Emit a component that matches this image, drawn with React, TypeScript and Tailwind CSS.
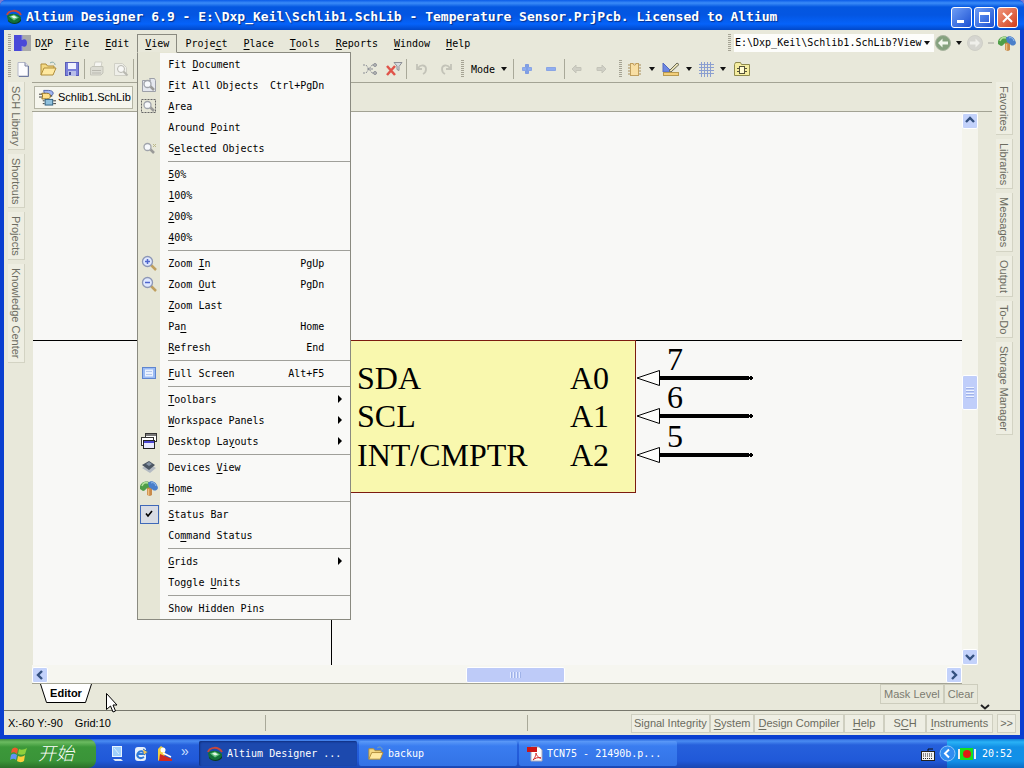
import type { ReactNode } from "react";
import clsx from "clsx";

type MenuEntry = {
  label: string;
  keys?: string;
  icon?: ReactNode;
  sub?: boolean;
  checked?: boolean;
};

// "&" marks the accelerator letter, which is drawn underlined
function Accel({ text }: { text: string }) {
  const at = text.indexOf("&");
  if (at < 0) return <span className="whitespace-pre">{text}</span>;
  return (
    <span className="whitespace-pre">
      {text.slice(0, at)}
      <u className="underline-offset-2">{text[at + 1]}</u>
      {text.slice(at + 2)}
    </span>
  );
}

function Gripper() {
  return (
    <svg width="4" height="18" className="shrink-0">
      {[0, 2, 4, 6, 8, 10, 12, 14, 16].map((y) => (
        <rect key={y} x="0" y={y} width="3" height="1" fill="#a5a394" />
      ))}
    </svg>
  );
}

function Separator() {
  return <div className="h-5 w-px shrink-0 bg-[#a9a999]" />;
}

function Caret() {
  return (
    <svg width="6" height="4" viewBox="0 0 6 4" className="shrink-0">
      <path d="M0 0h6L3 4z" fill="#111" />
    </svg>
  );
}

function Chevron({ dir }: { dir: "up" | "down" | "left" | "right" }) {
  const paths = {
    up: "M3 8l4-4 4 4",
    down: "M3 5l4 4 4-4",
    left: "M9 3L5 7l4 4",
    right: "M5 3l4 4-4 4",
  };
  return (
    <svg width="14" height="14" viewBox="0 0 14 14">
      <path d={paths[dir]} fill="none" stroke="#33507f" strokeWidth="2.4" />
    </svg>
  );
}

function AltiumLogo() {
  return (
    <svg width="16" height="16" viewBox="0 0 16 16" className="shrink-0">
      <path d="M1 6c2-5 10-6 14 0" fill="none" stroke="#c8473a" strokeWidth="2" />
      <path d="M1 7c3-3 10-3 14 1v3c-3 4-10 4-13 1z" fill="#137038" />
      <path d="M2 11c3 4 10 4 13-1v2c-3 4-10 4-13 0z" fill="#0a3d1d" />
      <path d="M3 7.500l5-2 5 3-5 3z" fill="#5fc27a" />
      <path d="M5 7.500l3-1 3 2-3 1z" fill="#e7f7e8" />
    </svg>
  );
}

function PuzzleIcon() {
  return (
    <svg width="17" height="16" viewBox="0 0 17 16" className="shrink-0">
      <rect x="7" width="10" height="16" fill="#a9aaa9" />
      <path d="M0 0h8v5c3-2 5 0 5 3s-2 5-5 3v5H0z" fill="#4a49d8" />
      <path d="M8 0v5M8 11v5" stroke="#8a8ae8" />
    </svg>
  );
}

function NewIcon() {
  return (
    <svg width="16" height="16" viewBox="0 0 16 16">
      <path d="M2 1.500h7l3 3V15H2z" fill="#fdfdff" stroke="#b4b8c8" />
      <path d="M9 1.500V5h3" fill="#dde" stroke="#7f86a0" />
      <path d="M12.500 5v10.500H3" fill="none" stroke="#6f7aa0" />
    </svg>
  );
}

function OpenIcon({ size = 18 }: { size?: number }) {
  return (
    <svg width={size} height={size} viewBox="0 0 18 18" className="shrink-0">
      <path d="M2 15V4h5l1.500 2H15v3" fill="#f4d983" stroke="#b08d3a" />
      <path d="M2 15l3-7h12l-3 7z" fill="#ffe9a0" stroke="#b08d3a" />
      <path d="M11 3c3-2 5 0 5 2" fill="none" stroke="#8aa" />
    </svg>
  );
}

function SaveIcon() {
  return (
    <svg width="16" height="16" viewBox="0 0 16 16">
      <rect x="1.500" y="1.500" width="13" height="13" fill="#7a80da" stroke="#5a5eb8" />
      <rect x="4" y="2" width="8" height="6" fill="#f1f3ff" />
      <rect x="4" y="10" width="8" height="5" fill="#b9bfe8" />
      <rect x="5" y="11" width="2" height="3" fill="#41479d" />
    </svg>
  );
}

function PrintIcon() {
  return (
    <svg width="16" height="16" viewBox="0 0 16 16">
      <path d="M5 6l1-5h7l-1 5" fill="#f6f6f2" stroke="#cfcfc5" />
      <path d="M1.500 7L3 5.500h11V12l-2 2H1.500z" fill="#dcdcd3" stroke="#c4c4b9" />
      <path d="M3 9.500h9M3 12h9" stroke="#b9b8af" />
    </svg>
  );
}

function PreviewIcon() {
  return (
    <svg width="16" height="16" viewBox="0 0 16 16">
      <path d="M1.500 2.500h8l4 4v8h-12z" fill="#efefe9" stroke="#d0d0c6" />
      <circle cx="8" cy="8" r="3.500" fill="#f8f8f6" stroke="#b8b8b0" />
      <path d="M10.500 10.500l4 4" stroke="#b8b8b0" strokeWidth="2" />
    </svg>
  );
}

function CrossWiresIcon() {
  return (
    <svg width="16" height="16" viewBox="0 0 16 16" fill="none" stroke="#8c8f96">
      <path d="M1 4h3l6 8h4M1 12h3l6-8h4" strokeDasharray="2 1" />
      <circle cx="13" cy="4" r="1.500" />
      <circle cx="13" cy="12" r="1.500" />
      <path d="M5 8h6" />
    </svg>
  );
}

function ClearFilterIcon() {
  return (
    <svg width="18" height="16" viewBox="0 0 18 16">
      <path d="M9 1.500h8l-3 4v4l-2-1V5z" fill="#d7dade" stroke="#8d9096" />
      <path d="M2 5l8 9M10 5l-8 9" stroke="#e0544a" strokeWidth="2.500" />
    </svg>
  );
}

function UndoIcon({ flip }: { flip?: boolean }) {
  return (
    <svg width="14" height="14" viewBox="0 0 14 14" className={clsx(flip && "-scale-x-100")}>
      <path d="M2 2v5h5M3 6c3-4 8-3 8 1 0 2-1 4-3 5" fill="none" stroke="#c3c3b8" strokeWidth="1.800" />
    </svg>
  );
}

function PlusIcon({ minus }: { minus?: boolean }) {
  return (
    <svg width="12" height="12" viewBox="0 0 12 12">
      {!minus && <path d="M4.500 1.500h3v9h-3z" fill="#7fa0e6" stroke="#7f9be0" />}
      <path d="M1.500 4.500h9v3h-9z" fill="#8fadf0" stroke="#8aa5e4" />
      {!minus && <path d="M6 2v8" stroke="#7fa0e6" strokeWidth="2" />}
    </svg>
  );
}

function GreyArrow({ flip }: { flip?: boolean }) {
  return (
    <svg width="12" height="12" viewBox="0 0 12 12" className={clsx(flip && "-scale-x-100")}>
      <path d="M1 6l4-4v2.500h5v3H5V10z" fill="#cfcfc5" stroke="#c4c4b9" />
    </svg>
  );
}

function ChipIcon() {
  return (
    <svg width="16" height="16" viewBox="0 0 16 16">
      <path d="M1 4h13M1 7h13M1 10h13M1 13h13" stroke="#a98f5a" />
      <rect x="3.500" y="2.500" width="8" height="12" fill="#f8dfa4" stroke="#c0a060" />
      <path d="M6 2.500c0 2 3 2 3 0" fill="#fff" stroke="#b48a3c" />
    </svg>
  );
}

function DrawIcon() {
  return (
    <svg width="18" height="16" viewBox="0 0 18 16">
      <path d="M1 2l9 9H1z" fill="#6c87e2" stroke="#5068c0" />
      <path d="M7 10l8-8 2 1.500-8 7.500z" fill="#e9e1b4" stroke="#6a6a58" />
      <rect x="1.500" y="11.500" width="15" height="3" fill="#f3cf7a" stroke="#b89a50" />
    </svg>
  );
}

function GridIcon() {
  return (
    <svg width="15" height="15" viewBox="0 0 15 15">
      <path
        d="M2.500 0v15M5.500 0v15M8.500 0v15M11.500 0v15M0 2.500h15M0 5.500h15M0 8.500h15M0 11.500h15"
        stroke="#8b9fd0"
      />
    </svg>
  );
}

function FolderChipIcon() {
  return (
    <svg width="16" height="14" viewBox="0 0 16 14">
      <path d="M.5 2.500l1-2h5l1 2h8v11H.5z" fill="#f5eda0" stroke="#8f8a4c" />
      <path d="M3 6.500h2M3 9.500h2M11 6.500h2M11 9.500h2" stroke="#55523a" />
      <rect x="5.500" y="4.500" width="5" height="7" fill="#fffbd2" stroke="#55523a" />
    </svg>
  );
}

function NavIcon({ dim }: { dim?: boolean }) {
  return (
    <svg width="18" height="18" viewBox="0 0 18 18" className={clsx(dim && "-scale-x-100")}>
      <circle cx="9" cy="9" r="7.500" fill={dim ? "#d5d5cf" : "#86a27f"} stroke={dim ? "#cfcfc7" : "#a9b5a0"} />
      <path d="M4 9l4.500-4.500v3H14v3H8.500v3z" fill={dim ? "#efefea" : "#f2f7ee"} />
    </svg>
  );
}

function HomeIcon() {
  return (
    <svg width="18" height="16" viewBox="0 0 18 16">
      <path d="M7 7h5v8l-2 1-3-1z" fill="#c98b4a" />
      <path d="M0 9C-1 5 3 0 9 2l1 6C7 6 6 11 3 11z" fill="#4f9e48" />
      <path d="M8 3c3-4 9-1 10 5-1 3-4 3-5 2L9 7z" fill="#4a7fca" />
      <path d="M2 6c1-3 3-4 6-3" stroke="#b4e29c" strokeWidth="1.500" fill="none" />
      <path d="M11 3c2-1 4 0 5 3" stroke="#9cc4f2" fill="none" />
      <path d="M8.500 9v6" stroke="#eebd7c" strokeWidth="1.500" />
    </svg>
  );
}

function Lens({ sign, frame }: { sign?: "+" | "-"; frame?: "page" | "dash" | "spark" }) {
  return (
    <svg width="16" height="16" viewBox="0 0 16 16">
      {frame === "page" && <path d="M1.500 3.500h8l-1-2h5l1 2v11h-13z" fill="#e4e7ee" stroke="#9da0a8" />}
      {frame === "dash" && (
        <rect x=".5" y="1.500" width="14" height="13" fill="none" stroke="#666" strokeDasharray="2 1" />
      )}
      {frame === "spark" && <path d="M12 4l3 3M15 4l-3 3" stroke="#bbb88a" />}
      {sign ? (
        <>
          <path d="M10 10l5 5" stroke="#c0a060" strokeWidth="2.500" />
          <circle cx="6.500" cy="6.500" r="5" fill="#dfe8ff" stroke="#8d97b6" strokeWidth="1.300" />
          <path d={sign === "+" ? "M4 6.500h5M6.500 4v5" : "M4 6.500h5"} stroke="#4f66cc" strokeWidth="1.500" />
        </>
      ) : (
        <>
          <path d="M9 9l4 4" stroke="#9a9a98" strokeWidth="2.500" />
          <circle cx="6.500" cy="7" r="3.500" fill="#f7f9fc" stroke="#a0a4ab" strokeWidth="1.300" />
        </>
      )}
    </svg>
  );
}

function ScreenIcon() {
  return (
    <svg width="16" height="14" viewBox="0 0 16 14">
      <rect x="1.500" y="1.500" width="13" height="11" fill="#9cbcf4" stroke="#5f86cf" />
      <rect x="4" y="3.500" width="8" height="7" fill="#eaf2ff" />
      <path d="M5 5.500h6M5 8.500h6" stroke="#b4c8ee" />
    </svg>
  );
}

function LayoutsIcon() {
  return (
    <svg width="16" height="16" viewBox="0 0 16 16">
      <rect x="4.500" y=".5" width="11" height="8" fill="#fff" stroke="#333" />
      <path d="M5 2h10" stroke="#777" strokeWidth="2" />
      <rect x=".5" y="4.500" width="12" height="8" fill="#fff" stroke="#333" />
      <rect x="2.500" y="7.500" width="11" height="8" fill="#e8e9ff" stroke="#222" />
      <path d="M3 9h10" stroke="#4a45d0" strokeWidth="2" />
    </svg>
  );
}

function DevicesIcon() {
  return (
    <svg width="16" height="14" viewBox="0 0 16 14">
      <path d="M1 8l7-4 7 4-6 5z" fill="#b3bac2" />
      <path d="M1 5l7-4 6 4-6 5z" fill="#4b5663" />
      <path d="M5 4l3-2 3 2-3 2z" fill="#8795a6" />
    </svg>
  );
}

function GatesIcon() {
  return (
    <svg width="17" height="17" viewBox="0 0 18 17" className="shrink-0">
      <path d="M5 1h5c3 0 5 1 5 3s-2 3-5 3H6z" fill="#9fb4f0" stroke="#4e62a8" />
      <path d="M0 5h4M0 8h4M10 7h4" stroke="#333" />
      <path d="M3 4h5c3 0 4 1 4 3s-1 3-4 3H3c1-2 1-4 0-6z" fill="#ffe08a" stroke="#8f6c1c" />
      <path d="M4 12h2M4 15h2M15 12h3M15 15h3" stroke="#333" />
      <rect x="6.500" y="10.500" width="8" height="6" fill="#8fc0dc" stroke="#2e5f80" />
    </svg>
  );
}

const menuGroups: MenuEntry[][] = [
  [
    { label: "Fit &Document" },
    { label: "&Fit All Objects", keys: "Ctrl+PgDn", icon: <Lens frame="page" /> },
    { label: "&Area", icon: <Lens frame="dash" /> },
    { label: "Around &Point" },
    { label: "S&elected Objects", icon: <Lens frame="spark" /> },
  ],
  [{ label: "&50%" }, { label: "&100%" }, { label: "&200%" }, { label: "&400%" }],
  [
    { label: "Zoom &In", keys: "PgUp", icon: <Lens sign="+" /> },
    { label: "Zoom &Out", keys: "PgDn", icon: <Lens sign="-" /> },
    { label: "&Zoom Last" },
    { label: "Pa&n", keys: "Home" },
    { label: "&Refresh", keys: "End" },
  ],
  [{ label: "&Full Screen", keys: "Alt+F5", icon: <ScreenIcon /> }],
  [
    { label: "&Toolbars", sub: true },
    { label: "&Workspace Panels", sub: true },
    { label: "Desktop La&youts", sub: true, icon: <LayoutsIcon /> },
  ],
  [
    { label: "Devices &View", icon: <DevicesIcon /> },
    { label: "&Home", icon: <HomeIcon /> },
  ],
  [{ label: "&Status Bar", checked: true }, { label: "Co&mmand Status" }],
  [{ label: "&Grids", sub: true }, { label: "Toggle &Units" }],
  [{ label: "Show Hidden Pins" }],
];

function ViewMenu() {
  return (
    <div
      role="menu"
      className="absolute left-0 top-full z-20 -mt-px w-[214px] border border-[#8a8a80] bg-[#f9f9f7] bg-[linear-gradient(to_right,#e6e6d6_22px,transparent_22px)] pt-px"
    >
      {menuGroups.map((group, i) => (
        <div key={i}>
          {i > 0 && (
            <div className="flex h-[5px] items-center pl-[30px]">
              <div className="h-px w-full bg-[#a0a09a]" />
            </div>
          )}
          {group.map((item) => (
            <button
              key={item.label}
              role={item.checked ? "menuitemcheckbox" : "menuitem"}
              aria-checked={item.checked}
              className="flex h-[21px] w-full items-center text-left"
            >
              <span className="flex w-[22px] shrink-0 items-center justify-center">
                {item.checked ? (
                  <span className="flex size-[19px] items-center justify-center border border-[#3f69b8] bg-[#d9dde4]">
                    <svg width="8" height="8" viewBox="0 0 8 8">
                      <path d="M1 3.500l2 2.500 4-5" fill="none" stroke="#000" strokeWidth="1.600" />
                    </svg>
                  </span>
                ) : (
                  item.icon
                )}
              </span>
              <span className="flex-1 pl-2">
                <Accel text={item.label} />
              </span>
              {item.keys && <span className="pr-[26px]">{item.keys}</span>}
              {item.sub && (
                <svg width="4" height="8" viewBox="0 0 4 8" className="mr-2">
                  <path d="M0 0v8l4-4z" fill="#000" />
                </svg>
              )}
            </button>
          ))}
        </div>
      ))}
    </div>
  );
}

function TitleBar() {
  const base = "flex size-[21px] items-center justify-center rounded-[3px] border border-white";
  return (
    <header className="flex h-[30px] items-center rounded-t-md bg-[linear-gradient(to_bottom,#0a5be8_0,#3b8cf8_3px,#0457e0_7px,#0456e2_15px,#0563fa_24px,#0148c8_30px)] pl-1.5 pr-1.5 pt-1">
      <AltiumLogo />
      <h1 className="ml-1 flex-1 whitespace-nowrap font-['DejaVu_Sans_Mono','Liberation_Mono',monospace] text-[13px] font-bold leading-4 text-white [text-shadow:1px_1px_1px_#06308c]">
        Altium Designer 6.9 - E:\Dxp_Keil\Schlib1.SchLib - Temperature Sensor.PrjPcb. Licensed to Altium
      </h1>
      <div className="flex gap-0.5">
        <button aria-label="Minimize" className={clsx(base, "bg-linear-to-br from-[#6f9df5] to-[#1c4fd2]")}>
          <svg width="13" height="13">
            <rect x="2" y="9" width="7" height="3" fill="#fff" />
          </svg>
        </button>
        <button aria-label="Maximize" className={clsx(base, "bg-linear-to-br from-[#6f9df5] to-[#1c4fd2]")}>
          <svg width="13" height="13">
            <rect x="1.500" y="1.500" width="10" height="10" fill="none" stroke="#fff" />
            <rect x="1" y="1" width="11" height="3" fill="#fff" />
          </svg>
        </button>
        <button aria-label="Close" className={clsx(base, "bg-linear-to-br from-[#f0967c] to-[#d03a12]")}>
          <svg width="13" height="13">
            <path d="M2 2l9 9M11 2l-9 9" stroke="#fff" strokeWidth="2" />
          </svg>
        </button>
      </div>
    </header>
  );
}

function MenuBar() {
  return (
    <div className="flex h-[26px] items-center pl-1">
      <Gripper />
      <button className="ml-0.5 flex items-center gap-1 pr-1">
        <PuzzleIcon />
        <Accel text="D&XP" />
      </button>
      <nav className="flex">
        {["&File", "&Edit", "&View", "Proje&ct", "&Place", "&Tools", "&Reports", "&Window", "&Help"].map((name) =>
          name === "&View" ? (
            <div key={name} className="relative">
              <button className="relative z-30 block h-[19px] border border-[#8a8a80] border-b-[#e6e6d6] bg-[#e8e8da] px-[7px]">
                <Accel text={name} />
              </button>
              <ViewMenu />
            </div>
          ) : (
            <button key={name} className="h-[19px] px-2">
              <Accel text={name} />
            </button>
          ),
        )}
      </nav>
      <div className="ml-auto flex items-center">
        <Gripper />
        <div className="ml-0.5 flex items-center gap-0.5 bg-[#fdfdfb]">
          <input
            aria-label="Address"
            defaultValue="E:\Dxp_Keil\Schlib1.SchLib?View"
            className="h-[18px] w-[188px] pl-px leading-[18px] outline-none"
          />
          <button aria-label="Address list" className="flex h-4 w-2.5 items-center">
            <Caret />
          </button>
        </div>
        <button aria-label="Back" className="flex items-center gap-1">
          <NavIcon />
          <Caret />
        </button>
        <button aria-label="Forward" className="ml-1 flex items-center gap-1">
          <NavIcon dim />
          <span className="h-0.5 w-1.5 bg-[#c6c6bc]" />
        </button>
        <button aria-label="Home" className="ml-1 mr-1">
          <HomeIcon />
        </button>
      </div>
    </div>
  );
}

function Tool({ label, children }: { label: string; children: ReactNode }) {
  return (
    <button aria-label={label} className="flex h-6 w-6 shrink-0 items-center justify-center">
      {children}
    </button>
  );
}

function Toolbar() {
  return (
    <div className="flex h-[26px] items-center pl-1">
      <Gripper />
      <Tool label="New"><NewIcon /></Tool>
      <Tool label="Open"><OpenIcon /></Tool>
      <Tool label="Save"><SaveIcon /></Tool>
      <Separator />
      <Tool label="Print"><PrintIcon /></Tool>
      <Tool label="Print preview"><PreviewIcon /></Tool>
      <Separator />
      <div className="w-[224px] shrink-0" />
      <Tool label="Cross select"><CrossWiresIcon /></Tool>
      <Tool label="Clear filter"><ClearFilterIcon /></Tool>
      <Separator />
      <div className="flex px-[3px]">
        <Tool label="Undo"><UndoIcon /></Tool>
        <Tool label="Redo"><UndoIcon flip /></Tool>
      </div>
      <Gripper />
      <button className="flex items-center gap-1.5 px-1.5">
        Mode
        <Caret />
      </button>
      <Separator />
      <div className="flex px-px">
        <Tool label="Add"><PlusIcon /></Tool>
        <Tool label="Remove"><PlusIcon minus /></Tool>
      </div>
      <Separator />
      <Tool label="Previous"><GreyArrow /></Tool>
      <Tool label="Next"><GreyArrow flip /></Tool>
      <div className="ml-1.5 flex items-center">
        <Gripper />
        <button aria-label="IEEE symbols" className="flex items-center gap-1.5 px-1">
          <ChipIcon />
          <Caret />
        </button>
        <button aria-label="Drawing tools" className="flex items-center gap-1.5 px-[3px]">
          <DrawIcon />
          <Caret />
        </button>
        <button aria-label="Grids" className="flex items-center gap-1.5 px-1">
          <GridIcon />
          <Caret />
        </button>
        <Tool label="Model manager"><FolderChipIcon /></Tool>
      </div>
    </div>
  );
}

function PanelTabs({ names }: { names: string[] }) {
  return (
    <aside className="flex w-7 shrink-0 flex-col items-start gap-1 pl-1 font-['Liberation_Sans',Arial,sans-serif] text-[11px] leading-4 text-[#6b6b60]">
      {names.map((name) => (
        <button
          key={name}
          className="border-b border-r border-[#d3d3c3] bg-[#eeeee2] pb-[3px] pt-1 [writing-mode:vertical-rl]"
        >
          {name}
        </button>
      ))}
    </aside>
  );
}

const pins = [
  { left: "SDA", right: "A0", no: "7", y: 266 },
  { left: "SCL", right: "A1", no: "6", y: 304 },
  { left: "INT/CMPTR", right: "A2", no: "5", y: 343 },
];

function Schematic() {
  return (
    <svg
      width="100%"
      className="min-h-[553px] min-w-0 flex-1 bg-[#f8f8f6] font-['Liberation_Serif','Times_New_Roman',serif] text-[32px]"
    >
      <path d="M298.500 228v325" stroke="#000" />
      <line x1="0" y1="228.500" x2="100%" y2="228.500" stroke="#000" />
      <rect x="298.500" y="228.500" width="304" height="152" fill="#f9f8ae" stroke="#7c1c10" />
      {pins.map((pin) => (
        <g key={pin.no}>
          <text x="324" y={pin.y + 11}>{pin.left}</text>
          <text x="537" y={pin.y + 11}>{pin.right}</text>
          <text x="634" y={pin.y - 8}>{pin.no}</text>
          <path d={`M604 ${pin.y}l22.500-7.500v15z`} fill="#fdfdfb" stroke="#000" />
          <path d={`M627 ${pin.y}h89`} stroke="#000" strokeWidth="4" />
          <path d={`M716 ${pin.y}h4M718 ${pin.y - 2}v4`} stroke="#000" strokeWidth="2" />
        </g>
      ))}
    </svg>
  );
}

const scrollBtn =
  "flex size-4 shrink-0 items-center justify-center rounded-[2px] border border-white bg-[#c3d2fb]";

function Editor() {
  return (
    <main className="flex min-w-0 flex-1 flex-col">
      <div className="flex h-[30px] items-center border-y border-[#a3a394] pl-0.5">
        <button className="flex h-[23px] items-center gap-0.5 border border-[#b5b5a5] bg-[#f6f6ee] pl-1 pr-px font-['Liberation_Sans',Arial,sans-serif] text-[11px]">
          <GatesIcon />
          Schlib1.SchLib
        </button>
      </div>
      <div className="flex flex-1 pl-px pr-3.5">
        <Schematic />
        <div className="flex w-4 flex-col bg-[#f4f4ec] pt-px">
          <button aria-label="Scroll up" className={scrollBtn}><Chevron dir="up" /></button>
          <div className="flex-[247]" />
          <div className="flex h-[35px] flex-col items-center justify-center gap-px rounded-[2px] border border-white bg-[#c0cefa]">
            {[0, 1, 2, 3].map((n) => (
              <span key={n} className="h-0.5 w-2 border-b border-[#9fb2e8] bg-[#eef3ff]" />
            ))}
          </div>
          <div className="flex-[240]" />
          <button aria-label="Scroll down" className={scrollBtn}><Chevron dir="down" /></button>
        </div>
      </div>
      <div className="mr-[30px] flex border-b border-[#a3a394] bg-[#f6f6f0] pt-0.5">
        <button aria-label="Scroll left" className={scrollBtn}><Chevron dir="left" /></button>
        <div className="flex-1">
          <div className="ml-[46.6%] flex h-4 w-[11%] items-center justify-center gap-px rounded-[2px] border border-white bg-[#becbf8]">
            {[0, 1, 2, 3].map((n) => (
              <span key={n} className="h-1.5 w-0.5 border-r border-[#9fb2e8] bg-[#e4ebff]" />
            ))}
          </div>
        </div>
        <button aria-label="Scroll right" className={scrollBtn}><Chevron dir="right" /></button>
      </div>
      <div className="flex h-[26px] items-start font-['Liberation_Sans',Arial,sans-serif] text-[11px]">
        <button className="relative ml-2 h-[19px] w-[52px] font-bold">
          <svg viewBox="0 0 52 19" className="absolute inset-0">
            <path d="M.5 0l6 18.500h39L51.500 0" fill="#fff" stroke="#000" />
          </svg>
          <span className="relative">Editor</span>
        </button>
        <div className="ml-auto flex text-[#7b7b70]">
          <button className="h-5 border border-[#cdcdbd] px-[3px]">Mask Level</button>
          <button className="h-5 border border-[#cdcdbd] px-[3px]">Clear</button>
        </div>
        <svg width="10" height="6" viewBox="0 0 10 6" className="ml-0.5 mr-0.5 self-end">
          <path d="M1 1l4 3.500L9 1" fill="none" stroke="#222" strokeWidth="2" />
        </svg>
      </div>
    </main>
  );
}

function StatusBar() {
  const panels = [
    { name: "Signal Integrity", pad: "px-0.5" },
    { name: "&System", pad: "px-[3px]" },
    { name: "&Design Compiler", pad: "px-[3px]" },
    { name: "&Help", pad: "px-2" },
    { name: "S&CH", pad: "px-2" },
    { name: "&Instruments", pad: "px-1" },
  ];
  return (
    <footer className="flex h-[25px] items-center border-t border-[#77776c] font-['Liberation_Sans',Arial,sans-serif] text-[11px]">
      <div className="flex w-[262px] gap-3 border-r border-[#a9a999] pl-1 leading-4">
        <span>X:-60 Y:-90</span>
        <span>Grid:10</span>
      </div>
      <div className="h-4 w-[262px] border-r border-[#a9a999]" />
      <div className="ml-auto mr-1 flex text-[#6b6b60]">
        {panels.map((p) => (
          <button key={p.name} className={clsx("h-[19px] border border-[#cfcfc0] bg-[#eeeee3]", p.pad)}>
            <Accel text={p.name} />
          </button>
        ))}
        <button aria-label="More panels" className="ml-1 h-[19px] border border-[#cfcfc0] bg-[#eeeee3] px-0.5">
          &gt;&gt;
        </button>
      </div>
    </footer>
  );
}

function Taskbar() {
  const task = "flex h-[25px] w-[158px] items-center gap-1 rounded-[2px] pl-2 text-left text-white";
  const idle = "bg-linear-to-b from-[#5c9af8] from-0% via-[#3a7df0] via-20% to-[#3373e6]";
  return (
    <div className="flex h-[29px] items-center bg-[linear-gradient(to_bottom,#2a62d8_0,#4a8cf2_2px,#2660dc_6px,#2058d8_22px,#1a45b0_29px)]">
      <button className="flex h-[29px] w-24 shrink-0 items-center gap-2.5 rounded-r-lg bg-[linear-gradient(to_bottom,#3f8a3d_0,#6bbb60_3px,#3c983a_8px,#3a9438_22px,#2b7029_29px)] pl-2.5 font-['Liberation_Sans','Noto_Sans_CJK_SC',sans-serif] text-lg font-light italic leading-none text-white">
        <svg width="18" height="18" viewBox="0 0 18 18">
          <path d="M2 4c2-2 4-2 6 0L7 9C5 7 3 7 1 8z" fill="#ec5a2c" />
          <path d="M9 4c2 1 5 1 8-1l-2 6c-2 1-5 1-7 0z" fill="#8fd13c" />
          <path d="M1 10c2-2 4-1 6 0l-1 5c-2-2-4-1-6 0z" fill="#5f93f4" />
          <path d="M8 11c2 1 5 1 7-1l-1 6c-3 2-5 1-7 0z" fill="#fcd03a" />
        </svg>
        开始
      </button>
      <div className="flex w-[103px] shrink-0 items-center gap-2 pl-[13px]">
        <button aria-label="Show desktop">
          <svg width="16" height="18" viewBox="0 0 16 18">
            <rect x="3.500" y="1.500" width="9" height="10" fill="#9fd0fb" stroke="#e8f4ff" />
            <path d="M4 14h8l2 2H6z" fill="#dfeaf5" />
            <path d="M5 3l5 6" stroke="#d9efff" />
          </svg>
        </button>
        <button aria-label="Internet">
          <svg width="16" height="18" viewBox="0 0 16 18">
            <rect x="2" y="2" width="11" height="14" rx="3" fill="#e6f0fb" />
            <path d="M11 12c-5 3-8-1-6-4s6-2 6 1H5" fill="none" stroke="#2d78d6" strokeWidth="2" />
            <path d="M10 4l5 3-4 3" fill="#f0c458" stroke="#2f6fc0" />
          </svg>
        </button>
        <button aria-label="Recorder">
          <svg width="16" height="18" viewBox="0 0 16 18">
            <path d="M1 16V4l3-3 4 3v6z" fill="#f3cf3f" />
            <circle cx="6" cy="5" r="2.500" fill="#fff" />
            <path d="M3 9l12 5v2H2z" fill="#d02a20" />
            <path d="M6 8l8 4" stroke="#fff" strokeWidth="1.500" />
          </svg>
        </button>
        <span className="self-start font-['Liberation_Sans',sans-serif] text-sm leading-3 text-[#cfe0ff]">»</span>
      </div>
      <div className="flex gap-0.5">
        <button className={clsx(task, "bg-[#1c49ae] shadow-[inset_1px_1px_2px_#0f2f80]")}>
          <AltiumLogo />
          Altium Designer ...
        </button>
        <button className={clsx(task, idle)}>
          <OpenIcon size={17} />
          backup
        </button>
        <button className={clsx(task, idle)}>
          <svg width="16" height="16" viewBox="0 0 16 16" className="shrink-0">
            <path d="M4 1h8l3 3v11H4z" fill="#fff" stroke="#aab" />
            <rect x="0" y="1" width="10" height="5" fill="#cc1616" />
            <path d="M6 14c3-3 3-7 3-7s1 5 5 5c-3-1-6 0-8 2z" fill="none" stroke="#d42020" />
          </svg>
          TCN75 - 21490b.p...
        </button>
      </div>
      <div className="ml-auto flex h-full items-center">
        <svg width="14" height="14" viewBox="0 0 14 14">
          <path d="M7 4V2h5" fill="none" stroke="#111" />
          <rect x=".5" y="4.500" width="13" height="9" fill="#f2f2f2" stroke="#222" />
          <path d="M2 7h10M2 9h10M2 11.500h10" stroke="#222" strokeDasharray="1 1" />
        </svg>
        <div className="ml-3 flex h-full items-center bg-[linear-gradient(to_bottom,#0c7fd8_0,#2ab2f6_3px,#1290e6_8px,#1190e8_22px,#0b6cc4_29px)] pr-3">
          <button aria-label="Show hidden icons" className="-ml-2">
            <svg width="17" height="17" viewBox="0 0 17 17">
              <circle cx="8.500" cy="8.500" r="7.500" fill="#2f8cf0" stroke="#8cc8fc" />
              <path d="M10 4.500l-4 4 4 4" fill="none" stroke="#fff" strokeWidth="2" />
            </svg>
          </button>
          <svg width="18" height="14" viewBox="0 0 18 14" className="mx-0.5">
            <path d="M1 2v10M17 2v10" stroke="#eee" strokeWidth="2" />
            <rect x="2" y="1" width="13" height="12" fill="#16e01c" />
            <circle cx="9" cy="7" r="4" fill="#e01b12" />
          </svg>
          <time className="pl-1 text-white">20:52</time>
        </div>
      </div>
    </div>
  );
}

export default function App() {
  return (
    <div className="flex min-h-screen flex-col overflow-hidden bg-[#7a7ad0] font-['DejaVu_Sans_Mono','Liberation_Mono',monospace] text-[10px] text-black">
      <div className="relative flex flex-1 flex-col rounded-t-md bg-[#0a3fd0]">
        <TitleBar />
        <div className="mx-1 mb-1 flex flex-1 flex-col bg-[#e8e8da]">
          <MenuBar />
          <Toolbar />
          <div className="flex flex-1">
            <PanelTabs names={["SCH Library", "Shortcuts", "Projects", "Knowledge Center"]} />
            <Editor />
            <PanelTabs names={["Favorites", "Libraries", "Messages", "Output", "To-Do", "Storage Manager"]} />
          </div>
          <StatusBar />
        </div>
        <svg width="12" height="21" viewBox="0 0 12 21" className="absolute bottom-[25px] left-[106px] z-40">
          <path d="M.5.5v16l4-3.500 2.500 6 2.500-1-2.500-6H11z" fill="#fff" stroke="#000" />
        </svg>
      </div>
      <Taskbar />
    </div>
  );
}
